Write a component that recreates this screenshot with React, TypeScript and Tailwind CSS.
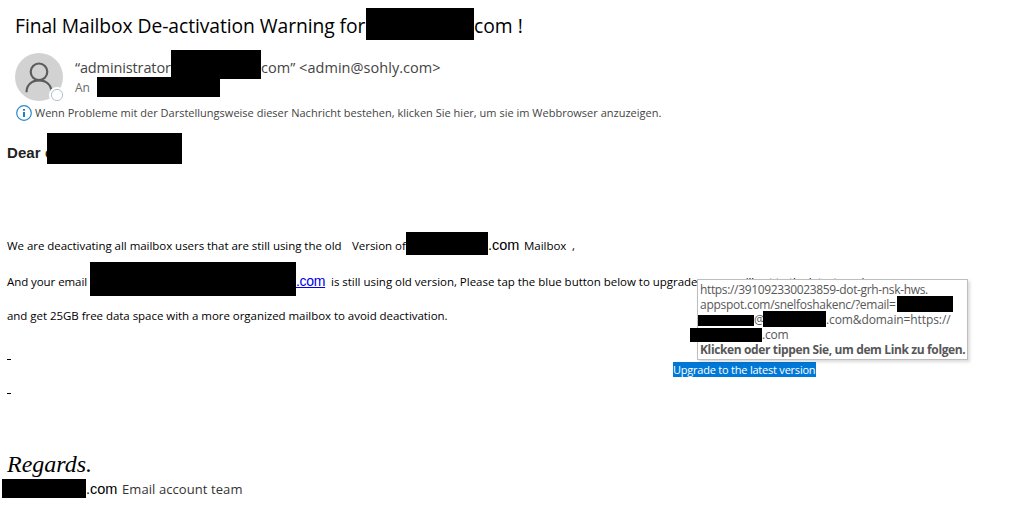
import type { ReactNode } from 'react';
import clsx from 'clsx';

// Black bar that covers private data
function Redacted({ className }: { className: string }) {
  return <span className={clsx('block shrink-0 bg-black', className)} />;
}

// One run of text inside a message line
function Run({ className, children }: { className?: string; children: ReactNode }) {
  return <span className={clsx('block shrink-0 whitespace-pre', className)}>{children}</span>;
}

function Avatar() {
  return (
    <svg className="mt-[3px] h-12 w-12 shrink-0 overflow-visible" viewBox="0 0 48 48" fill="none">
      <circle cx="24" cy="24" r="24" fill="#d2d2d2" />
      <circle cx="24" cy="18.8" r="8.3" stroke="#5c5c5c" strokeWidth="2.2" />
      <path d="M11.5 39.2C11.5 31.8 17 27.3 24 27.3S36.5 31.8 36.5 39.2" stroke="#5c5c5c" strokeWidth="2.2" />
      <circle cx="42" cy="42" r="8" fill="#fff" />
      <circle cx="42" cy="42" r="5.6" fill="#fff" stroke="#a9c4d1" />
    </svg>
  );
}

function InfoIcon() {
  return (
    <svg className="h-4 w-4 shrink-0" viewBox="0 0 16 16" fill="none">
      <circle cx="8" cy="8" r="7.3" stroke="#2b88c8" strokeWidth="1.2" />
      <path d="M7 3.9h2v1.9H7zM7 7h2v5H7z" fill="#1e7fc4" />
    </svg>
  );
}

function MessageHeader() {
  return (
    <header className="text-[#444]">
      <div className="flex h-8 pl-[15px] text-black">
        <Run className="w-[351px] text-[19.3px] leading-[36px] tracking-[-0.07px]">Final Mailbox De-activation Warning for</Run>
        <Redacted className="h-8 w-[108px]" />
        <Run className="text-[19.3px] leading-[36px]">com !</Run>
      </div>
      <div className="mt-2.5 flex h-[54px] pl-[15px]">
        <Avatar />
        <div className="ml-3">
          <div className="flex h-[27px] text-[14.5px] leading-[35px]">
            <Run className="w-24 tracking-[-0.12px]">“administrator(</Run>
            <Redacted className="h-[29px] w-[90px]" />
            <Run className="tracking-[0.04px]">com” &lt;admin@sohly.com&gt;</Run>
          </div>
          <div className="flex h-5 text-xs leading-[21px] text-[#6a6a6a]">
            <Run className="w-[22px]">An</Run>
            <Redacted className="h-5 w-[123px]" />
          </div>
        </div>
      </div>
      <div className="flex h-[18px] items-center gap-[3px] pl-4">
        <InfoIcon />
        <Run className="text-[11px] leading-[18px] tracking-[0.01px]">
          Wenn Probleme mit der Darstellungsweise dieser Nachricht bestehen, klicken Sie hier, um sie im Webbrowser anzuzeigen.
        </Run>
      </div>
    </header>
  );
}

function LinkTooltip() {
  return (
    <div className="absolute top-[279px] left-[697px] h-[81px] w-[271px] border border-[#bebebe] bg-white pt-0.5 pl-0.5 text-xs leading-[15px] text-[#575757] shadow-[2px_2px_3px_rgba(0,0,0,0.15)]">
      <Run className="tracking-[-0.35px]">https://391092330023859-dot-grh-nsk-hws.</Run>
      <div className="flex h-[15px]">
        <Run className="w-[197px] tracking-[-0.27px]">appspot.com/snelfoshakenc/?email=</Run>
        <Redacted className="-mt-px h-4 w-14" />
      </div>
      <div className="flex h-[15px]">
        <Redacted className="mt-[3px] -ml-0.5 h-[11px] w-14" />
        <Run className="w-[9px] tracking-[-1px]">@</Run>
        <Redacted className="-mt-px h-4 w-[63px]" />
        <Run className="tracking-[-0.1px]">.com&amp;domain=https://</Run>
      </div>
      <div className="flex h-[15px]">
        <Redacted className="mt-px -ml-2.5 h-3.5 w-[72px]" />
        <Run className="tracking-[-0.2px]">.com</Run>
      </div>
      <Run className="font-bold tracking-[-0.37px]">Klicken oder tippen Sie, um dem Link zu folgen.</Run>
    </div>
  );
}

function MessageBody() {
  return (
    <main className="mt-[11px] pl-[7px] text-[11.5px] leading-[17px] tracking-[-0.04px]">
      <div className="flex h-[31px] font-['Liberation_Sans',sans-serif] text-[15px] leading-[39px] font-bold text-[#222]">
        <Run className="w-10 tracking-[0.1px]">Dear c</Run>
        <Redacted className="h-[31px] w-[135px]" />
      </div>

      <div className="mt-[68px] flex h-[23px] leading-[28px]">
        <Run className="w-[345px]">We are deactivating all mailbox users that are still using the old</Run>
        <Run className="w-[54px]">Version of</Run>
        <Redacted className="h-[23px] w-[82px]" />
        <Run className="w-9 font-['Liberation_Sans',sans-serif] text-[14.5px] leading-[27px]">.com</Run>
        <Run className="w-12">Mailbox</Run>
        <Run>,</Run>
      </div>

      <div className="mt-[7px] flex h-[34px] leading-[40px]">
        <Run className="w-[83px] tracking-[-0.07px]">And your email</Run>
        <Redacted className="h-[34px] w-[206px]" />
        <Run className="w-[35px] font-['Liberation_Sans',sans-serif] text-[14px] leading-[39px] tracking-[-0.3px] text-[#0000ee] underline">
          .com
        </Run>
        <Run className="tracking-[-0.02px]">is still using old version, Please tap the blue button below to upgrade</Run>
        <Run className="tracking-[-0.2px]"> so you will get to the latest version</Run>
      </div>

      <div className="mt-[11px] h-[17px]">
        <Run>and get 25GB free data space with a more organized mailbox to avoid deactivation.</Run>
      </div>

      <div className="mt-[35px] flex h-[18px] items-end">
        <span className="mb-[17px] h-px w-1 bg-black" />
        <a className="ml-[662px] block h-[15px] w-[143px] bg-[#0078d7] text-[11px] leading-[15px] tracking-[-0.22px] whitespace-nowrap text-white">
          Upgrade to the latest version
        </a>
      </div>
      <div className="mt-4 h-px w-1 bg-black" />

      <div className="mt-14 h-[29px] font-['Liberation_Serif',serif] text-[24px] leading-7 tracking-normal italic">Regards.</div>
      <div className="-ml-[5px] flex h-[19px] leading-[21px]">
        <Redacted className="h-[19px] w-[84px]" />
        <Run className="w-9 font-['Liberation_Sans',sans-serif] text-[14.5px]">.com</Run>
        <Run className="text-[13px] tracking-[0.08px] text-[#333]">Email account team</Run>
      </div>
    </main>
  );
}

export default function App() {
  return (
    <div className="relative h-[511px] w-[1033px] overflow-hidden bg-white pt-2 font-['Open_Sans',sans-serif] text-black">
      <MessageHeader />
      <MessageBody />
      <LinkTooltip />
    </div>
  );
}
